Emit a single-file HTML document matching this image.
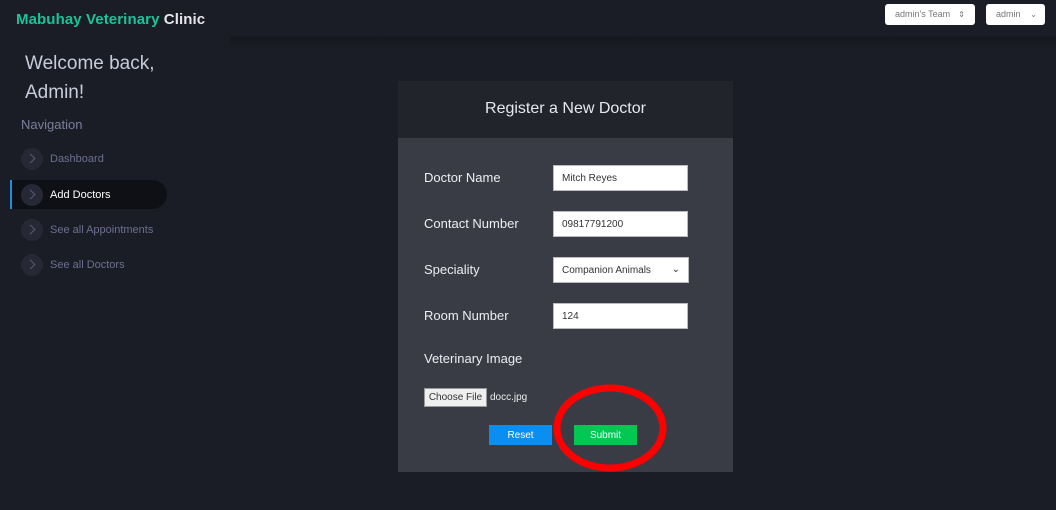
<!DOCTYPE html>
<html><head><style>
*{margin:0;padding:0;box-sizing:border-box}
body{width:1056px;height:510px;overflow:hidden;background:#1b1d26;font-family:"Liberation Sans",sans-serif;position:relative}
.hdr{position:absolute;left:0;top:0;width:1056px;height:36px;background:#1b1d26}
.shadow{position:absolute;left:230px;top:36px;width:826px;height:14px;background:linear-gradient(#15171d,#1b1d26)}
.logo{position:absolute;left:16px;top:11px;font-size:15px;font-weight:bold;color:#19c39a;letter-spacing:.1px}
.logo span{color:#e6e6ea}
.sel{position:absolute;top:4px;height:21px;background:#fff;border-radius:3px;font-size:9px;color:#777;line-height:21px;padding-left:10px}
.wel{position:absolute;left:25px;top:49px;font-size:19px;color:#c7cbdb;line-height:29px}
.nav{position:absolute;left:21px;top:117px;font-size:13px;color:#7b7f99}
.item{position:absolute;left:10px;width:157px;height:29px;font-size:11px;color:#6c7090;line-height:31px;padding-left:40px}
.item i{position:absolute;left:11px;top:4px;width:22px;height:22px;border-radius:50%;background:#262935}
.item i:after{content:"";position:absolute;left:6px;top:7px;width:6px;height:6px;border-right:1.5px solid #555a6e;border-top:1.5px solid #555a6e;transform:rotate(45deg)}
.act{background:#0f1015;border-radius:0 15px 15px 0;color:#fff;border-left:2px solid #1b8fe0;padding-left:38px}
.act i{left:9px}
.card{position:absolute;left:398px;top:81px;width:335px;height:391px;background:#3a3c45}
.ch{height:57px;background:#22242b;color:#e6e8ee;font-size:16px;text-align:center;line-height:56px}
.lab{position:absolute;left:26px;font-size:13px;color:#eceef2}
.inp{position:absolute;left:155px;width:135px;height:26px;background:#fff;border:1px solid #bbb;font-size:10px;color:#333;line-height:26px;padding-left:8px}
.btn{position:absolute;top:344px;height:20px;color:#fff;font-size:10px;text-align:center;line-height:21px}
</style></head><body>
<div class="hdr"></div><div class="shadow"></div>
<div class="logo">Mabuhay Veterinary <span>Clinic</span></div>
<div class="sel" style="left:885px;width:90px">admin's Team <span style="position:absolute;right:10px;font-size:8px">⇕</span></div>
<div class="sel" style="left:986px;width:59px">admin <span style="position:absolute;right:8px;font-size:8px">⌄</span></div>
<div class="wel">Welcome back,<br>Admin!</div>
<div class="nav">Navigation</div>
<div class="item" style="top:144px"><i></i>Dashboard</div>
<div class="item act" style="top:180px"><i></i>Add Doctors</div>
<div class="item" style="top:215px"><i></i>See all Appointments</div>
<div class="item" style="top:250px"><i></i>See all Doctors</div>
<div class="card">
<div class="ch">Register a New Doctor</div>
<div class="lab" style="top:89px">Doctor Name</div>
<div class="inp" style="top:84px">Mitch Reyes</div>
<div class="lab" style="top:135px">Contact Number</div>
<div class="inp" style="top:130px">09817791200</div>
<div class="lab" style="top:181px">Speciality</div>
<div class="inp" style="top:176px;width:136px">Companion Animals<span style="position:absolute;right:8px;top:-1px">⌄</span></div>
<div class="lab" style="top:227px">Room Number</div>
<div class="inp" style="top:222px">124</div>
<div class="lab" style="top:270px">Veterinary Image</div>
<div style="position:absolute;left:26px;top:307px;width:63px;height:19px;background:#efefef;border:1px solid #999;font-size:10px;color:#333;text-align:center;line-height:18px">Choose File</div>
<div style="position:absolute;left:92px;top:311px;font-size:10px;color:#eee">docc.jpg</div>
<div class="btn" style="left:91px;width:63px;background:#0a8ef0">Reset</div>
<div class="btn" style="left:176px;width:63px;background:#00c853">Submit</div>
</div>
<svg style="position:absolute;left:0;top:0" width="1056" height="510"><ellipse cx="610" cy="428" rx="53" ry="40" fill="none" stroke="#f00" stroke-width="7"/></svg>
</body></html>
